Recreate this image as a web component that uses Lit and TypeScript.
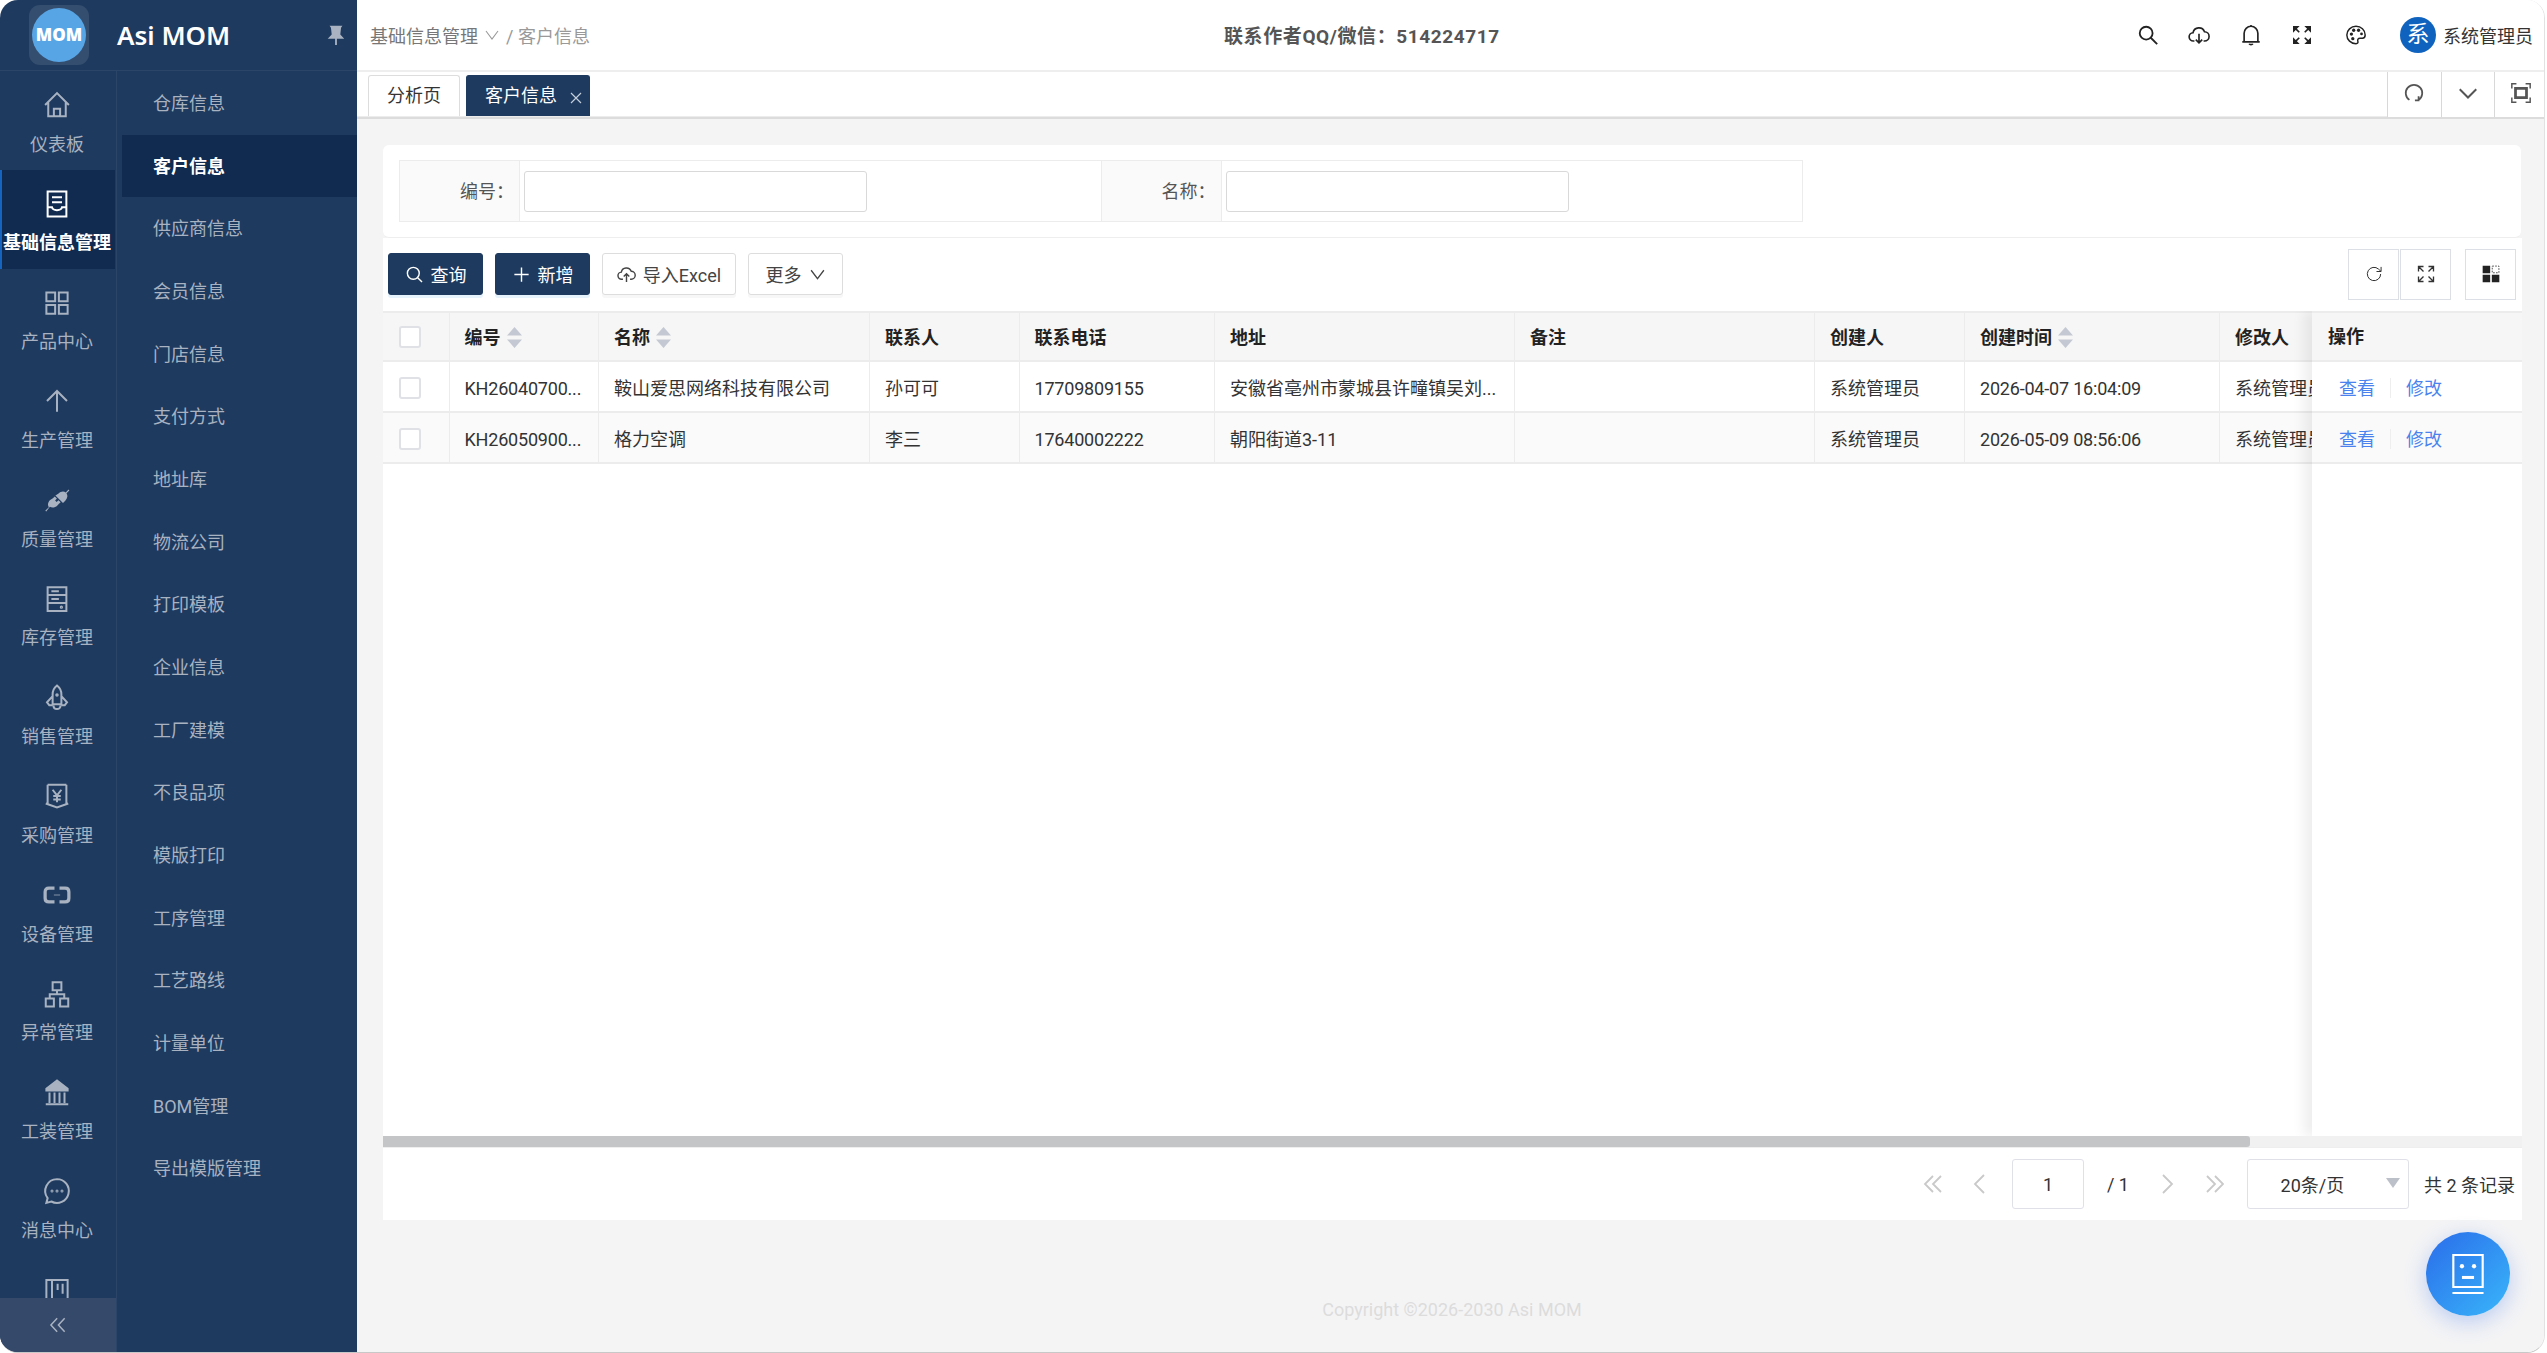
import { LitElement, html, css, svg } from 'lit';
import { customElement } from 'lit/decorators.js';

const ico = (body: unknown, sw = 1.6) => html`<svg viewBox="0 0 24 24" fill="none" stroke="currentColor" stroke-width=${sw}>${body}</svg>`;

const railIcons: Record<string, unknown> = {
  home: ico(svg`<path d="M2.500 12 12 2.500l9.500 9.500M5 9.500v11.500h14V9.500M9.500 21v-6h5v6"/>`),
  doc: ico(svg`<path d="M4.500 2h15v20h-15zM8 6.500h8M8 10.500h8M4.500 14.500H8c.6 3.200 7.400 3.200 8 0h3.500"/>`, 1.6),
  grid: ico(svg`<path d="M3.500 3.500h7v7h-7zM13.500 3.500h7v7h-7zM3.500 13.500h7v7h-7zM13.500 13.500h7v7h-7z"/>`),
  up: ico(svg`<path d="M12 20.500V4M4 12l8-8 8 8"/>`),
  plug: html`<svg viewBox="0 0 24 24" fill="currentColor"><path d="M13 7c2-2.200 4.600-2.400 6-1l2.200-2.400.7.700-2.300 2.300c1.200 1.600.9 4-1 6L16.800 14.400 10.700 8.400z"/><path d="m8.700 10.500 1.500-1.400 1.700 1.700-1.400 1.500 1.200 1.200 1.500-1.400 1.700 1.700-1.500 1.400-1.100 1.200c-1.900 1.900-4.400 2.100-6 1L3.400 21.200l-.8-.7 2.900-2.800c-1.200-1.400-.9-3.900 1-5.800z"/></svg>`,
  cabinet: ico(svg`<path d="M4.500 2.500h15v19h-15zM4.500 8.800h15M4.500 15.200h15M7.500 5.700h6M7.500 12h6"/><circle cx="15.500" cy="18.500" r=".5"/>`),
  rocket: ico(svg`<path d="M12 2c-2.500 2-3.500 4.300-3.500 7v8h7V9c0-2.700-1-5-3.500-7zM8.500 10.500 4 15.500l1.800 2.200h2.700M15.500 10.500l4.500 5-1.800 2.200h-2.700M9.200 18c0 3.800 5.600 3.800 5.600 0"/><circle cx="12" cy="9.500" r=".6"/>`),
  yen: ico(svg`<path d="M4.500 3h15M4.500 3v15M19.500 3v15M3 18l9 3.200 9-3.200M8.500 7l3.500 4.500L15.500 7M12 11.500v5.500M9 12h6M9 14.800h6"/>`),
  bracket: ico(svg`<path d="M10 6.500H5.500C3.500 6.500 2.500 7.500 2.500 9.500v5c0 2 1 3 3 3H10M14 6.500h4.500c2 0 3 1 3 3v5c0 2-1 3-3 3H14" stroke-width="2.600"/><path d="M9.500 12h5" stroke-width="1" opacity=".6"/>`),
  tree: ico(svg`<path d="M8.500 2.500h7v6.500h-7zM3 15.500h6.500V22H3zM14.500 15.500H21V22h-6.500zM12 9v3.200M6.200 15.500v-3.300h11.600v3.300"/>`),
  bank: ico(svg`<path d="M12 2 3.500 8.500V10h17V8.500z" fill="currentColor"/><path d="M6 11.500v8.500M10 11.500v8.500M14 11.500v8.500M18 11.500v8.500M3 21h18"/>`),
  msg: ico(svg`<path d="M12 2.500a9.500 9.500 0 1 1-4.500 17.900L3.500 21.500l1-3.800A9.500 9.500 0 0 1 12 2.500z"/><circle cx="8" cy="12" r=".4"/><circle cx="12" cy="12" r=".4"/><circle cx="16" cy="12" r=".4"/>`),
  board: ico(svg`<path d="M3.500 22V4h17v18M8 4v18M12.500 7v5M16.500 7v8"/>`, 1.6),
};

const rail = [
  ['home', '仪表板'], ['doc', '基础信息管理'], ['grid', '产品中心'], ['up', '生产管理'],
  ['plug', '质量管理'], ['cabinet', '库存管理'], ['rocket', '销售管理'], ['yen', '采购管理'],
  ['bracket', '设备管理'], ['tree', '异常管理'], ['bank', '工装管理'], ['msg', '消息中心'], ['board', ''],
];

const subMenu = ['仓库信息', '客户信息', '供应商信息', '会员信息', '门店信息', '支付方式', '地址库', '物流公司', '打印模板', '企业信息', '工厂建模', '不良品项', '模版打印', '工序管理', '工艺路线', '计量单位', 'BOM管理', '导出模版管理'];

const columns = [
  { t: '编号', sort: true }, { t: '名称', sort: true }, { t: '联系人' }, { t: '联系电话' }, { t: '地址' },
  { t: '备注' }, { t: '创建人' }, { t: '创建时间', sort: true }, { t: '修改人' },
];

const rows = [
  ['KH26040700...', '鞍山爱思网络科技有限公司', '孙可可', '17709809155', '安徽省亳州市蒙城县许疃镇吴刘...', '', '系统管理员', '2026-04-07 16:04:09', '系统管理员'],
  ['KH26050900...', '格力空调', '李三', '17640002222', '朝阳街道3-11', '', '系统管理员', '2026-05-09 08:56:06', '系统管理员'],
];
const numCols = [0, 3, 7];

const chev = (d: string) => html`<svg class="pg" viewBox="0 0 24 24" fill="none" stroke="currentColor" stroke-width="1.800"><path d=${d}/></svg>`;
const sortIcon = html`<svg class="sort" viewBox="0 0 12 24" preserveAspectRatio="none" fill="#c3c8d2"><path d="M6 1 12 10H0zM0 14h12L6 23z"/></svg>`;

@customElement('app-root')
export class AppRoot extends LitElement {
  static styles = css`
    :host {
      display: block;
      height: 100vh;
      background: #fff;
      font-family: Roboto, "Noto Sans CJK SC", sans-serif;
      font-size: 18px;
      color: #333;
    }
    svg { display: block; }
    .win {
      height: 1353px;
      width: 2545px;
      box-sizing: border-box;
      border-radius: 18px;
      overflow: hidden;
      display: grid;
      grid-template-columns: 357px 1fr;
      border-bottom: 1px solid #c8c8c8;
      border-right: 1px solid #e2e2e2;
    }
    .side {
      background: #1e3a5f;
      display: grid;
      grid-template-columns: 116px 1fr;
      grid-template-rows: 71px 1fr;
      min-height: 0;
    }
    .brand {
      grid-column: 1 / 3;
      display: flex;
      align-items: center;
      border-bottom: 1px solid #2b4568;
    }
    .logo {
      width: 60px;
      height: 60px;
      margin-left: 29px;
      border-radius: 11px;
      background: rgba(255, 255, 255, 0.1);
      display: flex;
      align-items: center;
      justify-content: center;
    }
    .logo span {
      width: 54px;
      height: 54px;
      border-radius: 50%;
      background: #58a5e6;
      color: #fff;
      font: 900 17px/54px "Noto Sans", sans-serif;
      text-align: center;
    }
    .title {
      margin-left: 28px;
      color: #fff;
      font: 600 26px "Noto Sans", sans-serif;
      flex: 1;
    }
    .pin { width: 22px; height: 22px; margin-right: 10px; color: #a9b3c2; }
    .rail-wrap {
      display: flex;
      flex-direction: column;
      min-height: 0;
      border-right: 1px solid #2b4568;
      margin-right: -1px;
    }
    .rail { flex: 1; overflow: hidden; min-height: 0; }
    .rail-item {
      height: 98.75px;
      display: flex;
      flex-direction: column;
      align-items: center;
      padding-top: 19px;
      box-sizing: border-box;
      color: #a8b2c1;
      margin-right: 2px;
      white-space: nowrap;
    }
    .rail-item svg { width: 30px; height: 30px; }
    .rail-item span { line-height: 24px; margin-top: 12.500px; }
    .rail-item.on {
      background: #102a50;
      box-shadow: inset 2px 0 0 #1565c0;
      color: #fff;
      font-weight: 700;
      margin-right: 1px;
      padding-right: 1px;
    }
    .collapse {
      height: 54px;
      flex: none;
      background: #35496a;
      color: #a8b2c1;
      display: flex;
      align-items: center;
      justify-content: center;
    }
    .collapse svg { width: 20px; height: 20px; }
    .sub { padding-left: 6px; padding-top: 1px; }
    .sub div {
      height: 62.67px;
      line-height: 64px;
      padding-left: 31px;
      color: #a8b2c1;
    }
    .sub div.on { background: #102a50; color: #fff; font-weight: 700; }

    .main { display: flex; flex-direction: column; min-width: 0; background: #f4f4f5; position: relative; }
    .head {
      height: 72px;
      flex: none;
      box-sizing: border-box;
      background: #fff;
      border-bottom: 2px solid #eee;
      display: flex;
      align-items: center;
      padding-left: 13px;
      color: #999;
    }
    .crumb { display: flex; align-items: center; gap: 6px; width: 241px; white-space: nowrap; }
    .crumb .c1 { color: #777; }
    .crumb svg { width: 16px; height: 16px; }
    .notice { margin: 0 0 2px 613px; color: #555; font-weight: 700; font-size: 19px; letter-spacing: 0.6px; white-space: nowrap; flex: 1; }
    .tools { display: flex; align-items: center; color: #222; }
    .tools svg { width: 22px; height: 22px; margin-right: 29.300px; }
    .tools svg:nth-child(4) { margin-right: 32px; }
    .tools svg:nth-child(5) { margin-right: 33px; }
    .avatar {
      width: 36px;
      height: 36px;
      border-radius: 50%;
      background: #0f63bf;
      color: #fff;
      font-size: 23px;
      line-height: 36px;
      text-align: center;
    }
    .uname { margin: 0 11px 0 7px; color: #333; }

    .tabs {
      height: 47px;
      flex: none;
      box-sizing: border-box;
      background: #fff;
      border-bottom: 2px solid #dcdcdc;
      display: flex;
    }
    .tab-list {
      flex: 1;
      display: flex;
      gap: 6px;
      align-items: flex-end;
      padding: 0 0 0 11px;
      border-bottom: 1px solid #ececec;
      margin-bottom: 1px;
      height: 44px;
    }
    .tab {
      height: 41px;
      box-sizing: border-box;
      border: 1px solid #ddd;
      border-bottom: none;
      border-radius: 3px 3px 0 0;
      padding: 0 18px;
      line-height: 40px;
      color: #333;
    }
    .tab.on {
      background: #1e3a5f;
      border-color: #1e3a5f;
      color: #fff;
      display: flex;
      align-items: center;
      gap: 13px;
      padding-right: 7px;
    }
    .tab.on svg { width: 12px; height: 12px; margin-top: 3px; color: #c5cedb; }
    .tab-btn {
      width: 53.500px;
      box-sizing: border-box;
      border-left: 1px solid #d8d8d8;
      display: flex;
      align-items: center;
      justify-content: center;
      color: #555;
      padding-bottom: 4px;
    }
    .tab-btn:last-child { width: 50px; padding-left: 3px; }
    .tab-btn svg { width: 22px; height: 22px; }

    .body { flex: 1; min-height: 0; padding: 26px 23px 0 26px; display: flex; flex-direction: column; }
    .search {
      height: 93px;
      flex: none;
      box-sizing: border-box;
      background: #fff;
      border-radius: 6px;
      padding: 15px 0 0 16px;
      border-bottom: 1px solid #eee;
    }
    .form { display: flex; height: 62px; width: 1404px; box-sizing: border-box; border: 1px solid #ececec; }
    .field { flex: 1; display: flex; align-items: center; }
    .field + .field { border-left: 1px solid #ececec; }
    .field label {
      width: 120px;
      box-sizing: border-box;
      align-self: stretch;
      background: #fafafa;
      border-right: 1px solid #ececec;
      text-align: right;
      padding-right: 5px;
      line-height: 61px;
      color: #555;
    }
    .field i {
      display: block;
      width: 343px;
      height: 41px;
      box-sizing: border-box;
      margin-left: 4px;
      border: 1px solid #d9d9d9;
      border-radius: 3px;
      background: #fff;
    }

    .panel { width: 2139px; height: 982px; flex: none; background: #fff; display: flex; flex-direction: column; }
    .bar { height: 73px; flex: none; display: flex; align-items: center; padding: 0 5px 1px; box-sizing: border-box; gap: 12px; }
    .btn {
      height: 42px;
      box-sizing: border-box;
      border: 1px solid #ddd;
      border-radius: 3px;
      display: flex;
      align-items: center;
      justify-content: center;
      gap: 7px;
      color: #444;
      background: #fff;
      box-shadow: 0 3px 0 #f7f7f7;
      white-space: nowrap;
      width: 95px;
    }
    .btn.wide { width: 134px; }
    .btn svg { width: 19px; height: 19px; }
    .btn.more svg { width: 17px; height: 17px; }
    .btn.pri { background: #1e3a5f; border-color: #1e3a5f; color: #fff; box-shadow: 0 3px 0 #e6f3fd; }
    .spacer { flex: 1; }
    .sq {
      width: 51px;
      height: 51px;
      box-sizing: border-box;
      border: 1px solid #dcdfe6;
      display: flex;
      align-items: center;
      justify-content: center;
      color: #333;
    }
    .sq svg { width: 20px; height: 20px; }
    .sq + .sq { margin-left: -11px; }
    .sq.last { margin-left: 2px; margin-right: 1px; }

    .table { flex: 1; min-height: 0; position: relative; overflow: hidden; }
    .tr {
      display: grid;
      grid-template-columns: 66.500px 149.500px 271px 149.500px 195.500px 300px 300px 150px 255px 150px 460px;
      width: 2450px;
      height: 51px;
      box-sizing: border-box;
      border-bottom: 2px solid #ececec;
      line-height: 49px;
      color: #333;
    }
    .tr .td { padding-top: 3px; }
    .tr.th { background: #f6f6f6; font-weight: 700; color: #222; border-top: 2px solid #ececec; }
    .tr.th .td { padding-top: 1px; }
    .tr.alt { background: #fafafa; }
    .td {
      padding-left: 15px;
      border-right: 1px solid #ececec;
      white-space: nowrap;
      overflow: hidden;
      display: flex;
      align-items: center;
      gap: 6px;
      box-sizing: border-box;
    }
    .td.num { letter-spacing: -0.2px; }
    .td.chk { padding-left: 16px; }
    .td.chk i {
      width: 22px;
      height: 22px;
      box-sizing: border-box;
      border: 2px solid #dfe1e7;
      border-radius: 3px;
      background: #fff;
    }
    .sort { width: 15px; height: 23px; flex: none; }
    .fixed {
      position: absolute;
      top: 0;
      bottom: 0;
      right: 0;
      width: 210px;
      background: #fff;
      box-shadow: -8px 0 12px rgba(0, 0, 0, 0.07);
    }
    .fixed .tr { display: block; width: auto; padding-left: 16px; }
    .fixed .tr.th { line-height: 47px; }
    .link { display: flex !important; align-items: center; color: #4a82ee; padding: 3px 0 0 27px !important; }
    .link u { text-decoration: none; }
    .link b { width: 1px; height: 20px; background: #eee; margin: 0 15px; }
    .scroll { height: 11px; flex: none; background: #f1f1f1; }
    .scroll div { width: 1867px; height: 100%; background: #c4c5c7; border-radius: 0 3px 3px 0; }
    .pager {
      height: 73px;
      flex: none;
      border-top: 1px solid #eee;
      box-sizing: border-box;
      display: flex;
      align-items: center;
      justify-content: flex-end;
      padding-right: 7px;
      color: #333;
    }
    .pg { width: 24px; height: 24px; color: #c9c9c9; }
    .pgbox {
      height: 50px;
      box-sizing: border-box;
      border: 1px solid #e0e0e8;
      border-radius: 3px;
      background: #fff;
      display: flex;
      align-items: center;
      justify-content: center;
    }
    .pgnum { width: 72px; margin: 0 23px 0 20px; }
    .pgsel { width: 162px; margin: 0 15px 0 20px; position: relative; padding-right: 31px; }
    .pgsel s {
      position: absolute;
      right: 8px;
      top: 18px;
      border: 7px solid transparent;
      border-top: 10px solid #bcc0c8;
      border-bottom: none;
    }
    .total { white-space: nowrap; }
    .gap-a { width: 23px; }
    .gap-b { width: 26px; }
    .gap-c { width: 24px; }
    .foot { text-align: center; color: #dcdcdc; margin-top: 77px; line-height: 26px; }
    .fab {
      position: absolute;
      right: 34px;
      bottom: 36px;
      width: 84px;
      height: 84px;
      border-radius: 50%;
      background: linear-gradient(135deg, #2a6cea, #39b6fa);
      box-shadow: 0 6px 22px rgba(50, 110, 235, 0.3);
      display: flex;
      align-items: center;
      justify-content: center;
      color: #fff;
    }
    .fab svg { width: 38px; height: 42px; }
  `;

  render() {
    const i = (body: unknown, sw = 1.6) => ico(body, sw);
    return html`<div class="win">
      <aside class="side">
        <div class="brand">
          <div class="logo"><span>MOM</span></div>
          <div class="title">Asi MOM</div>
          <svg class="pin" viewBox="0 0 24 24" fill="currentColor"><path d="M5 2h14l-1.500 2-.8 7.500L21 16H13v7h-2v-7H3l4.300-4.500L6.500 4z"/></svg>
        </div>
        <div class="rail-wrap">
          <div class="rail">
            ${rail.map(([k, t]) => html`<div class="rail-item ${k === 'doc' ? 'on' : ''}">${railIcons[k]}${t ? html`<span>${t}</span>` : ''}</div>`)}
          </div>
          <div class="collapse">${i(svg`<path d="M11 4 3.500 12l7.500 8M20 4l-7.500 8 7.500 8"/>`, 1.8)}</div>
        </div>
        <div class="sub">
          ${subMenu.map((t) => html`<div class=${t === '客户信息' ? 'on' : ''}>${t}</div>`)}
        </div>
      </aside>
      <section class="main">
        <header class="head">
          <div class="crumb"><span class="c1">基础信息管理</span>${i(svg`<path d="M3 6l9 12 9-12"/>`, 1.6)}<span>/ 客户信息</span></div>
          <div class="notice">联系作者QQ/微信：514224717</div>
          <div class="tools">
            ${i(svg`<circle cx="10" cy="10" r="7"/><path d="m15 15 7 7"/>`, 2)}
            ${i(svg`<path d="M7 18.500H6a4.500 4.500 0 0 1-.5-9A6.500 6.500 0 0 1 18 8.500a5 5 0 0 1 0 10h-1M12 10.500v10M8.500 17l3.500 3.500 3.500-3.500"/>`, 1.8)}
            ${i(svg`<path d="M4.500 19.500V10a7.500 7.500 0 0 1 15 0v9.500M2.500 19.500h19M12 1v1.500M10 21.500c.6 1.400 3.400 1.400 4 0"/>`, 1.8)}
            ${i(svg`<path d="m5 5 4 4M19 5l-4 4M5 19l4-4M19 19l-4-4" stroke-width="1.800"/><path d="M3 3h4.500L3 7.500zM21 3h-4.500L21 7.500zM3 21h4.500L3 16.500zM21 21h-4.500l4.500-4.500z" fill="currentColor"/>`)}
            ${i(svg`<path d="M12 2.500C6.500 2.500 2 6.800 2 12s4.500 9.500 10 9.500c2 0 2.500-1.300 2-2.700-.6-1.700.3-3.300 2.300-3.300H19c1.800 0 3-1.300 3-3.500 0-5.500-4.500-9.500-10-9.500z"/><g fill="currentColor" stroke="none"><circle cx="7" cy="11" r="1.800"/><circle cx="9.500" cy="6.800" r="1.800"/><circle cx="14.800" cy="6.800" r="1.800"/><circle cx="18" cy="10.800" r="1.500"/><circle cx="8.500" cy="16" r="1.800"/></g>`)}
            <div class="avatar">系</div>
            <div class="uname">系统管理员</div>
          </div>
        </header>
        <div class="tabs">
          <div class="tab-list">
            <div class="tab">分析页</div>
            <div class="tab on">客户信息 ${i(svg`<path d="M2 2l20 20M22 2 2 22"/>`, 2.4)}</div>
          </div>
          <div class="tab-btn">${i(svg`<path d="M7 19.500A9 9 0 1 1 17 19.500M17 15.500v4.500h-4" />`, 1.9)}</div>
          <div class="tab-btn">${i(svg`<path d="m3 8 9 9 9-9"/>`, 2.2)}</div>
          <div class="tab-btn">${i(svg`<path d="M2 7V2h5M17 2h5v5M2 17v5h5M17 22h5v-5"/><path d="M6 7h12v10H6z" stroke-width="3"/>`, 1.6)}</div>
        </div>
        <div class="body">
          <div class="search">
            <div class="form">
              <div class="field"><label>编号：</label><i></i></div>
              <div class="field"><label>名称：</label><i></i></div>
            </div>
          </div>
          <div class="panel">
            <div class="bar">
              <div class="btn pri">${i(svg`<circle cx="10.500" cy="10.500" r="7.500"/><path d="m16 16 5.500 5.500"/>`, 1.8)}查询</div>
              <div class="btn pri">${i(svg`<path d="M12 3v18M3 12h18"/>`, 1.8)}新增</div>
              <div class="btn wide">${i(svg`<path d="M7.500 18H6a4.500 4.500 0 0 1-.5-9A6.500 6.500 0 0 1 18 8a5 5 0 0 1 0 10h-1.500M12 21.500V11M8.500 14.500 12 11l3.500 3.500"/>`, 1.8)}导入Excel</div>
              <div class="btn more">更多${i(svg`<path d="M3 6l9 12 9-12"/>`, 1.8)}</div>
              <div class="spacer"></div>
              <div class="sq">${i(svg`<path d="M20 12a8 8 0 1 1-2.500-5.800L20.500 9M20.500 3.500V9H15"/>`, 1.2)}</div>
              <div class="sq">${i(svg`<path d="M3 9V3h6M3 3l6 6M15 3h6v6M21 3l-6 6M3 15v6h6M3 21l6-6M21 15v6h-6M21 21l-6-6"/>`, 1.6)}</div>
              <div class="sq last"><svg viewBox="0 0 24 24"><path d="M2 2h9v9H2zM2 13h9v9H2zM13 13h9v9h-9z" fill="#222"/><path d="M13.500 2.500h8v8h-8z" fill="none" stroke="#333" stroke-dasharray="2 1.500"/></svg></div>
            </div>
            <div class="table">
              <div class="tr th">
                <div class="td chk"><i></i></div>
                ${columns.map((c) => html`<div class="td">${c.t}${c.sort ? sortIcon : ''}</div>`)}
                <div class="td"></div>
              </div>
              ${rows.map((r, n) => html`<div class="tr ${n % 2 ? 'alt' : ''}">
                <div class="td chk"><i></i></div>
                ${r.map((v, c) => html`<div class="td ${numCols.includes(c) ? 'num' : ''}">${v}</div>`)}
                <div class="td"></div>
              </div>`)}
              <div class="fixed">
                <div class="tr th">操作</div>
                ${rows.map((_, n) => html`<div class="tr link ${n % 2 ? 'alt' : ''}"><u>查看</u><b></b><u>修改</u></div>`)}
              </div>
            </div>
            <div class="scroll"><div></div></div>
            <div class="pager">
              ${chev('M12 4 4 12l8 8M20 4l-8 8 8 8')}
              <span class="gap-a"></span>
              ${chev('M16 3 7 12l9 9')}
              <div class="pgbox pgnum">1</div>
              <span>/ 1</span>
              <span class="gap-b"></span>
              ${chev('m8 3 9 9-9 9')}
              <span class="gap-c"></span>
              ${chev('m4 4 8 8-8 8M12 4l8 8-8 8')}
              <div class="pgbox pgsel">20条/页<s></s></div>
              <div class="total">共 2 条记录</div>
            </div>
          </div>
          <div class="foot">Copyright ©2026-2030 Asi MOM</div>
        </div>
        <div class="fab">
          <svg viewBox="0 0 44 48" fill="none" stroke="currentColor" stroke-width="2.500"><path d="M5 2h34v37H5zM4 46h36"/><circle cx="15" cy="15" r="2.500" fill="currentColor" stroke="none"/><circle cx="29" cy="15" r="2.500" fill="currentColor" stroke="none"/><path d="M15 28h14" stroke-width="3.500"/></svg>
        </div>
      </section>
    </div>`;
  }
}
